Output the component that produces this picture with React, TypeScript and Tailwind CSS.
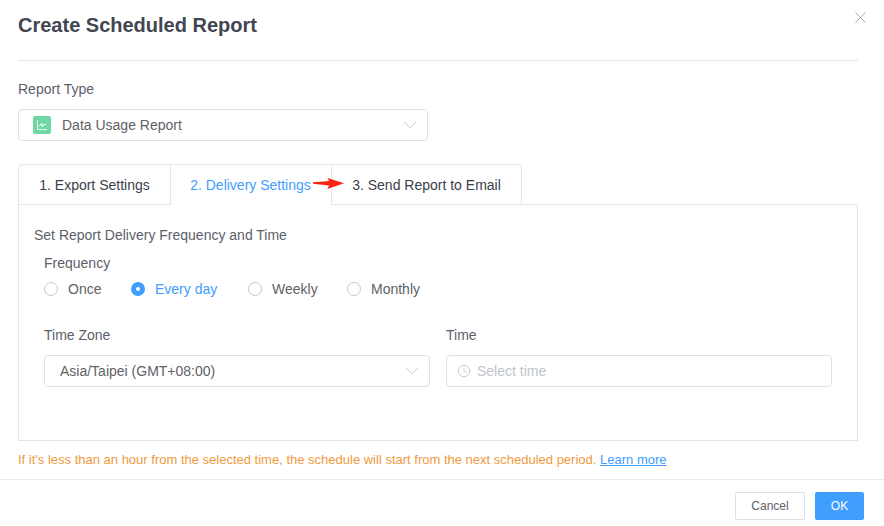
import * as React from "react";
import { ChevronDown, Clock, X } from "lucide-react";

const frequencies = [
  { label: "Once", width: "w-[87px]" },
  { label: "Every day", width: "w-[117px]", checked: true },
  { label: "Weekly", width: "w-[99px]" },
  { label: "Monthly", width: "" },
];

function Radio({ label, width, checked }: { label: string; width: string; checked?: boolean }) {
  return (
    <label className={`flex items-center ${width}`}>
      {checked ? (
        <span className="flex h-[14px] w-[14px] items-center justify-center rounded-full bg-[#409eff]">
          <span className="h-1 w-1 rounded-full bg-white" />
        </span>
      ) : (
        <span className="h-[14px] w-[14px] rounded-full border border-[#c9c9cc] bg-white" />
      )}
      <span className={`ml-[10px] text-sm leading-none ${checked ? "text-[#409eff]" : "text-[#606266]"}`}>{label}</span>
    </label>
  );
}

function ChartIcon() {
  return (
    <span className="flex h-[18px] w-[18px] items-center justify-center rounded-[2px] bg-[#6fd6a4]">
      <svg width="12" height="12" viewBox="0 0 12 12" fill="none" stroke="#fff" strokeWidth="1">
        <path d="M1.5 1v9.5H11" opacity="0.8" />
        <path d="M3 6.5h1.5l1-2.5 1 4 1-2.5H10" strokeWidth="0.9" />
      </svg>
    </span>
  );
}

export default function App() {
  return (
    <div className="relative h-[526px] w-[884px] overflow-hidden bg-white font-['Liberation_Sans',Arial,sans-serif] text-[#303133]">
      <div className="px-[18px] pr-[26px]">
        <div className="flex h-[61px] items-start border-b border-[#e4e4ea] pt-[13px]">
          <h1 className="text-xl font-bold leading-6 text-[#414650]">Create Scheduled Report</h1>
        </div>
        <p className="mt-5 text-sm leading-4 text-[#5c606a]">Report Type</p>
        <div className="mt-3 flex h-8 w-[410px] items-center rounded border border-[#e0e0e8] pl-[14px] pr-[6px]">
          <ChartIcon />
          <span className="ml-[11px] flex-1 text-sm text-[#606266]">Data Usage Report</span>
          <ChevronDown size={22} strokeWidth={1} className="text-[#c0c4cc]" />
        </div>

        <div className="relative mt-[23px] flex h-[41px]">
          <div className="z-10 flex h-[41px] w-[153px] items-center justify-center rounded-tl border border-[#e4e4ea] bg-white text-sm text-[#3a3f4b]">
            1. Export Settings
          </div>
          <div className="z-10 flex h-[41px] w-[160px] items-center justify-center border-b border-t border-[#e4e4ea] border-b-white bg-white pr-[1px] text-sm text-[#409eff]">
            2. Delivery Settings
          </div>
          <div className="z-10 flex h-[41px] w-[191px] items-center justify-center rounded-tr border border-[#e4e4ea] bg-white text-sm text-[#3a3f4b]">
            3. Send Report to Email
          </div>
          <svg className="absolute left-[294px] top-[13px] z-20" width="33" height="13" viewBox="0 0 33 13">
            <path d="M1 5.2 L17 4 L15.5 1 L32 6.3 L15.5 12 L17 8.5 L1 6.8 Z" fill="#fb2516" />
          </svg>
        </div>

        <div className="-mt-px h-[237px] border border-[#e4e4ea] pl-[15px] pt-[22px]">
          <p className="text-sm leading-4 text-[#5c606a]">Set Report Delivery Frequency and Time</p>
          <div className="pl-[10px]">
            <p className="mt-3 text-sm leading-4 text-[#5c606a]">Frequency</p>
            <div className="mt-[10px] flex h-[16px] items-center">
              {frequencies.map((f) => (
                <Radio key={f.label} {...f} />
              ))}
            </div>
            <div className="mt-[30px] flex gap-4">
              <div className="w-[386px]">
                <p className="text-sm leading-4 text-[#5c606a]">Time Zone</p>
                <div className="mt-3 flex h-8 items-center rounded border border-[#e0e0e8] pl-[15px] pr-[6px]">
                  <span className="flex-1 text-sm text-[#606266]">Asia/Taipei (GMT+08:00)</span>
                  <ChevronDown size={22} strokeWidth={1} className="text-[#c0c4cc]" />
                </div>
              </div>
              <div className="w-[386px]">
                <p className="text-sm leading-4 text-[#5c606a]">Time</p>
                <div className="mt-3 flex h-8 items-center rounded border border-[#e0e0e8] pl-[10px]">
                  <Clock size={14} strokeWidth={1.4} className="text-[#c0c4cc]" />
                  <span className="ml-[6px] text-sm text-[#c0c4cc]">Select time</span>
                </div>
              </div>
            </div>
          </div>
        </div>

        <p className="mt-[11px] text-[13px] leading-4 text-[#f09a3e]">
          If it's less than an hour from the selected time, the schedule will start from the next scheduled period.{" "}
          <a className="text-[#409eff] underline">Learn more</a>
        </p>
      </div>

      <div className="mt-[11px] flex h-[47px] items-start justify-end gap-[10px] border-t border-[#e9e9ee] pr-5 pt-3">
        <button className="h-7 w-[70px] rounded-[2px] border border-[#dcdfe6] bg-white text-xs text-[#606266]">Cancel</button>
        <button className="h-7 w-[49px] rounded-[2px] bg-[#409eff] text-xs text-white">OK</button>
      </div>

      <X size={19} strokeWidth={1} className="absolute right-[14px] top-[8px] text-[#909399]" />
    </div>
  );
}
